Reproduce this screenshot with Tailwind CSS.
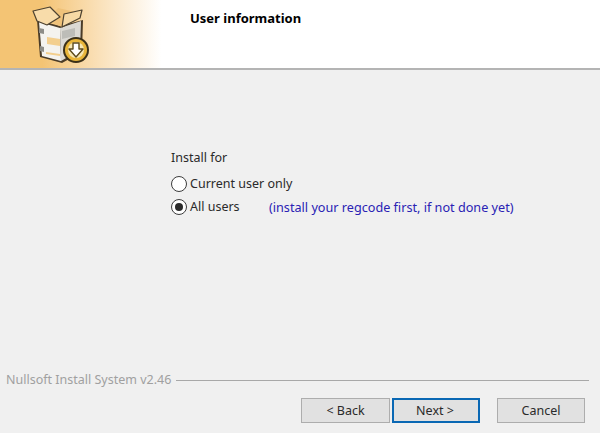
<!DOCTYPE html>
<html lang="en">
<head>
<meta charset="UTF-8">
<title>User information</title>
<script src="https://cdn.jsdelivr.net/npm/@tailwindcss/browser@4"></script>
</head>
<body class="w-[600px] h-[433px] overflow-hidden bg-[#f0f0f0] font-['Noto_Sans',sans-serif] text-[12.5px] text-[#2a2a2a]">
  <!-- Header -->
  <div class="h-[70px] flex bg-white border-b-2 border-[#b4b4b4]">
    <div class="w-[170px] shrink-0 pl-[30px] bg-gradient-to-r from-[#f4c474] from-25% to-white to-95%">
      <svg width="66" height="68" viewBox="30 0 66 68">
        <!-- box shadow and body -->
        <path d="M37 20 L40 57 L62 63 L82 52 L83 20 L60 26 Z" fill="#4a3c28"/>
        <path d="M39 22 L60 28 L61 61 L42 56 Z" fill="#f4f3ef"/>
        <path d="M60 28 L81 21 L80 50 L61 61 Z" fill="#dcdad4"/>
        <!-- inside and flaps -->
        <path d="M46 20 L58 8 L80 13 L62 27 Z" fill="#efc27a"/>
        <path d="M33 11 L50 7 L60 17 L47 25 L37 21 Z" fill="#f8dcaa" stroke="#4d4230" stroke-width="1.2" stroke-linejoin="round"/>
        <path d="M64 14 L82 10 L80 18 L62 27 Z" fill="#f6d9a5" stroke="#4d4230" stroke-width="1.2" stroke-linejoin="round"/>
        <!-- stripes and label -->
        <path d="M39 28 L44 29 L44 34 L39 33 Z M40 46 L44 47 L44 52 L40 51 Z" fill="#8d8d88"/>
        <path d="M47 37 L60 39 L60 46 L47 44 Z" fill="#f3cf8e"/>
        <path d="M46 52 L60 54 L60 56 L46 54 Z" fill="#f3cf8e"/>
        <path d="M62 31 L75 28 L75 36 L62 39 Z" fill="#bdbdb8"/>
        <!-- download badge -->
        <circle cx="76" cy="50" r="13" fill="#3b3018"/>
        <circle cx="76" cy="50" r="11" fill="#e8b53a"/>
        <circle cx="76" cy="50" r="8" fill="#f6e6b2"/>
        <path d="M73 43 H79 V49 H83 L76 57 L69 49 H73 Z" fill="#fff" stroke="#5c4a1c" stroke-width="1.4" stroke-linejoin="round"/>
      </svg>
    </div>
    <h1 class="ml-[20px] pt-[10px] text-[13px] leading-[16px] font-bold text-black">User information</h1>
  </div>

  <!-- Options -->
  <div class="h-[301px] pl-[171px] pt-[79px]">
    <p class="leading-[17px]">Install for</p>
    <label class="mt-[9px] h-[18px] flex items-center gap-[3px]">
      <span class="w-[16px] h-[16px] rounded-full border-[1.5px] border-[#3c3c3c] bg-white"></span>
      <span>Current user only</span>
    </label>
    <label class="mt-[5px] h-[18px] flex items-center gap-[3px]">
      <span class="w-[16px] h-[16px] rounded-full border-[1.5px] border-[#3c3c3c] bg-white flex items-center justify-center">
        <span class="w-[8px] h-[8px] rounded-full bg-[#2a2a2a]"></span>
      </span>
      <span class="w-[76px]">All users</span>
      <span class="text-[12.65px] text-[#2a22b4]">(install your regcode first, if not done yet)</span>
    </label>
  </div>

  <!-- Branding line -->
  <div class="h-[18px] pl-[6px] pr-[11px] flex items-center gap-[5px] text-[#a0a0a0]">
    <span class="whitespace-nowrap">Nullsoft Install System v2.46</span>
    <span class="flex-1 h-[1px] bg-[#a8a8a8]"></span>
  </div>

  <!-- Buttons -->
  <div class="mt-[9px] flex pl-[301px]">
    <button class="w-[89px] h-[25px] pt-[2px] bg-[#e1e1e1] border border-[#adadad]">&lt; Back</button>
    <button class="ml-[2px] w-[88px] h-[25px] pt-[1px] pr-[2px] bg-[#e1e1e1] border-2 border-[#0a68b4]">Next &gt;</button>
    <button class="ml-[17px] w-[88px] h-[25px] pt-[2px] bg-[#e1e1e1] border border-[#adadad]">Cancel</button>
  </div>
</body>
</html>
